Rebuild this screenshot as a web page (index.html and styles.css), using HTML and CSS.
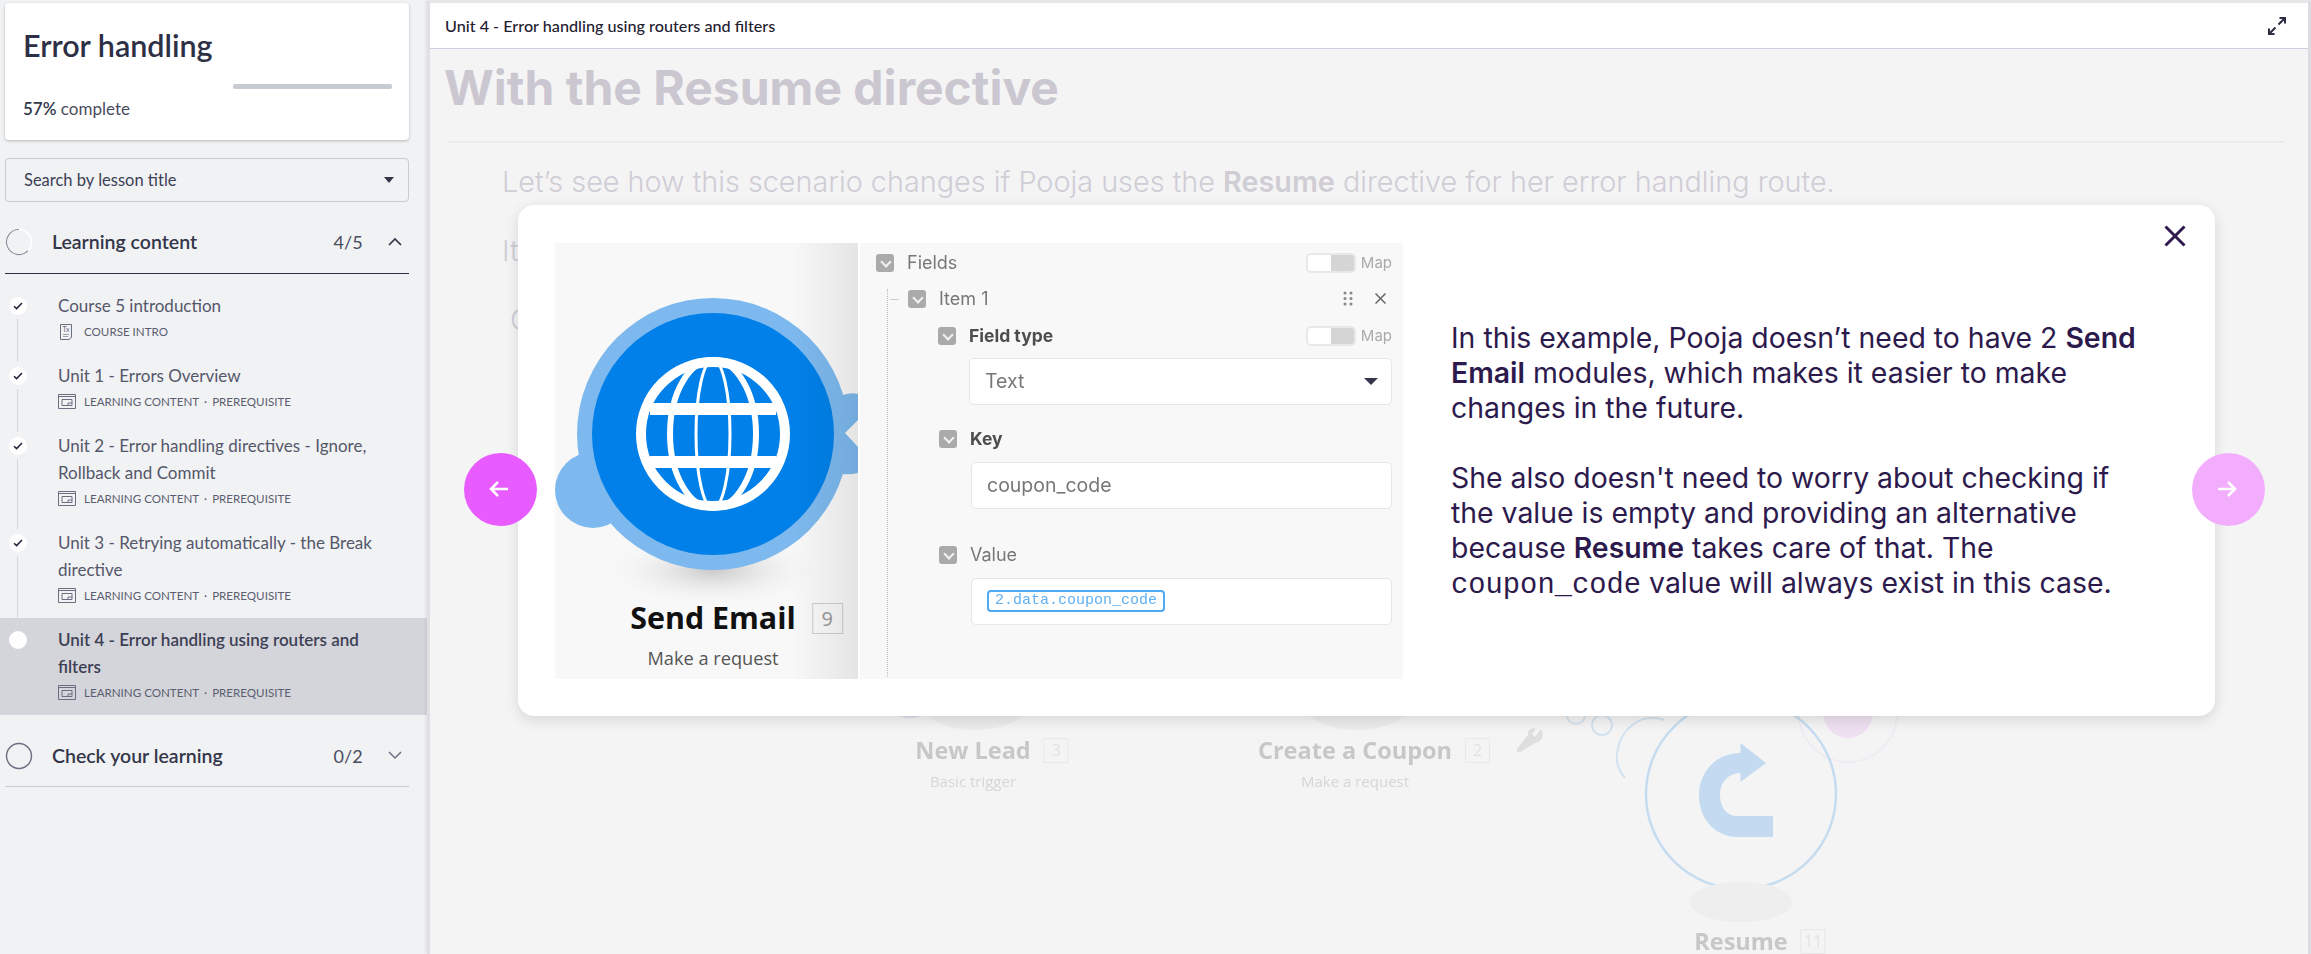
FILE: index.html

```html
<!DOCTYPE html>
<html lang="en">
<head>
  <meta charset="UTF-8" />
  <title>Error handling</title>
  <link rel="stylesheet" href="styles.css">
</head>
<body>
  <aside class="sidebar">
    <div class="course-card">
      <h2>Error handling</h2>
      <div class="progress-track"></div>
      <div class="progress-text"><b>57%</b> complete</div>
    </div>

    <div class="search-box">
      <span>Search by lesson title</span>
      <i class="caret"></i>
    </div>

    <div class="section-head open">
      <svg class="ring" width="28" height="28" viewBox="0 0 28 28">
        <circle cx="14" cy="14" r="12.5" fill="none" stroke="#fff" stroke-width="1.6"/>
        <path d="M14 1.5A12.5 12.5 0 1 0 23 22.7" fill="none" stroke="#8d8f9c" stroke-width="1.2"/>
      </svg>
      <span class="section-title">Learning content</span>
      <span class="section-count">4/5</span>
      <svg width="14" height="9" viewBox="0 0 14 9"><path d="M1 8l6-6 6 6" fill="none" stroke="#34364a" stroke-width="1.7"/></svg>
    </div>

    <ul class="lessons">
      <li class="lesson">
        <span class="dot done"><svg width="10" height="8" viewBox="0 0 10 8"><path d="M1 4.2l2.6 2.4L9 1" fill="none" stroke="#23243a" stroke-width="1.5"/></svg></span>
        <div class="lesson-title">Course 5 introduction</div>
        <div class="lesson-meta">
          <svg class="meta-icon" width="18" height="18" viewBox="0 0 18 18"><path d="M2.5 1.5h11v13l-2.5 2h-8.500z" fill="none" stroke="#6b6e80"/><path d="M5 11.500h6M5 13.500h5" stroke="#9fa1ae"/><text x="4.500" y="9" class="tx">Tx</text></svg>
          COURSE INTRO
        </div>
      </li>
      <li class="lesson">
        <span class="dot done"><svg width="10" height="8" viewBox="0 0 10 8"><path d="M1 4.2l2.6 2.4L9 1" fill="none" stroke="#23243a" stroke-width="1.5"/></svg></span>
        <div class="lesson-title">Unit 1 - Errors Overview</div>
        <div class="lesson-meta">
          <svg class="meta-icon" width="18" height="15" viewBox="0 0 18 15"><path d="M.5.5h17v14H.5zM.5 2.500h17" fill="none" stroke="#6b6e80"/><path d="M4 5.500h10v6H4zM10 11.500V9h4" fill="none" stroke="#6b6e80"/></svg>
          LEARNING CONTENT <em>·</em> PREREQUISITE
        </div>
      </li>
      <li class="lesson">
        <span class="dot done"><svg width="10" height="8" viewBox="0 0 10 8"><path d="M1 4.2l2.6 2.4L9 1" fill="none" stroke="#23243a" stroke-width="1.5"/></svg></span>
        <div class="lesson-title">Unit 2 - Error handling directives - Ignore, Rollback and Commit</div>
        <div class="lesson-meta">
          <svg class="meta-icon" width="18" height="15" viewBox="0 0 18 15"><path d="M.5.5h17v14H.5zM.5 2.500h17" fill="none" stroke="#6b6e80"/><path d="M4 5.500h10v6H4zM10 11.500V9h4" fill="none" stroke="#6b6e80"/></svg>
          LEARNING CONTENT <em>·</em> PREREQUISITE
        </div>
      </li>
      <li class="lesson">
        <span class="dot done"><svg width="10" height="8" viewBox="0 0 10 8"><path d="M1 4.2l2.6 2.4L9 1" fill="none" stroke="#23243a" stroke-width="1.5"/></svg></span>
        <div class="lesson-title">Unit 3 - Retrying automatically - the Break directive</div>
        <div class="lesson-meta">
          <svg class="meta-icon" width="18" height="15" viewBox="0 0 18 15"><path d="M.5.5h17v14H.5zM.5 2.500h17" fill="none" stroke="#6b6e80"/><path d="M4 5.500h10v6H4zM10 11.500V9h4" fill="none" stroke="#6b6e80"/></svg>
          LEARNING CONTENT <em>·</em> PREREQUISITE
        </div>
      </li>
      <li class="lesson current">
        <span class="dot"></span>
        <div class="lesson-title">Unit 4 - Error handling using routers and filters</div>
        <div class="lesson-meta">
          <svg class="meta-icon" width="18" height="15" viewBox="0 0 18 15"><path d="M.5.5h17v14H.5zM.5 2.500h17" fill="none" stroke="#6b6e80"/><path d="M4 5.500h10v6H4zM10 11.500V9h4" fill="none" stroke="#6b6e80"/></svg>
          LEARNING CONTENT <em>·</em> PREREQUISITE
        </div>
      </li>
    </ul>

    <div class="section-head closed">
      <svg class="ring" width="28" height="28" viewBox="0 0 28 28"><circle cx="14" cy="14" r="12.500" fill="none" stroke="#6d6f80" stroke-width="1.500"/></svg>
      <span class="section-title">Check your learning</span>
      <span class="section-count">0/2</span>
      <svg width="14" height="9" viewBox="0 0 14 9"><path d="M1 1l6 6 6-6" fill="none" stroke="#6d6f80" stroke-width="1.500"/></svg>
    </div>
  </aside>

  <main class="main">
    <header class="topbar">
      <span>Unit 4 - Error handling using routers and filters</span>
      <svg width="18" height="18" viewBox="0 0 18 18"><path d="M10.500 7.500L17 1M11.500 1H17v5.500M7.500 10.500L1 17M6.500 17H1v-5.500" fill="none" stroke="#2b2d42" stroke-width="2"/></svg>
    </header>

    <article class="lesson-body">
      <h1>With the Resume directive</h1>
      <hr>
      <p>Let’s see how this scenario changes if Pooja uses the <b>Resume</b> directive for her error handling route.</p>
      <p>It</p>
      <p class="indented">C</p>
    </article>

    <!-- faded scenario behind the dialog -->
    <div class="diagram">
      <svg width="1884" height="954" viewBox="427 0 1884 954">
        <ellipse cx="910" cy="712" rx="16" ry="6" fill="#dfdbef"/>
        <ellipse cx="975" cy="705" rx="52" ry="25" fill="#ececed"/>
        <ellipse cx="1357" cy="705" rx="52" ry="25" fill="#ececed"/>
        <circle cx="1576" cy="715" r="9" fill="none" stroke="#d3e2ef" stroke-width="2"/>
        <circle cx="1602" cy="725" r="10" fill="none" stroke="#d3e2ef" stroke-width="2"/>
        <path d="M1664 720c-22-8-44 8-47 34-1 9 2 17 8 24" fill="none" stroke="#d3e2ef" stroke-width="2"/>
        <circle cx="1848" cy="713" r="49" fill="none" stroke="#f1ebf3" stroke-width="2"/>
        <circle cx="1848" cy="713" r="25" fill="#eee0f0"/>
        <circle cx="1741" cy="794" r="95" fill="none" stroke="#c5dcf0" stroke-width="2.500"/>
        <ellipse cx="1741" cy="902" rx="51" ry="20" fill="#eeeeee"/>
        <path d="M1740.500 743L1766 763 1740.500 782V773C1728 773 1720 783 1720 795 1720 808 1727 816 1737 816H1773V837H1738C1715 837 1699 819 1699 795 1699 771 1717 753 1740.500 753z" fill="#c3daf0"/>
        <path d="M1541 729c3 5 2 11-3 13l-3 1-15 9c-2 1-4-1-3-3l11-14 0-3c1-3 6-5 8-3l-4 5 3 3z" fill="#dedede"/>
      </svg>
      <div class="node node-lead"><span class="node-name">New Lead<i class="node-badge">3</i></span><small>Basic trigger</small></div>
      <div class="node node-coupon"><span class="node-name">Create a Coupon<i class="node-badge">2</i></span><small>Make a request</small></div>
      <div class="node node-resume"><span class="node-name">Resume<i class="node-badge">11</i></span></div>
    </div>

    <section class="dialog">
      <div class="figure">
        <div class="module">
          <svg class="module-art" width="303" height="436" viewBox="555 243 303 436">
            <defs>
              <radialGradient id="shade"><stop offset="0" stop-color="#c9c9c9"/><stop offset="1" stop-color="#f8f8f8" stop-opacity="0"/></radialGradient>
            </defs>
            <ellipse cx="713" cy="570" rx="112" ry="38" fill="url(#shade)"/>
            <circle cx="593" cy="490" r="38" fill="#7db9ee"/>
            <path d="M840 396Q850 392 858 394V473Q850 475 840 474z" fill="#7db9ee"/>
            <circle cx="713" cy="434" r="136" fill="#7db9ee"/>
            <path d="M858 420L845 433 858 447z" fill="#f8f8f8"/>
            <circle cx="713" cy="434" r="121" fill="#0080e8"/>
            <g fill="none" stroke="#fff">
              <circle cx="713" cy="434" r="72" stroke-width="10"/>
              <path d="M650 409h126M650 462h126" stroke-width="12"/>
              <ellipse cx="713" cy="434" rx="43" ry="74" stroke-width="6"/>
              <ellipse cx="713" cy="434" rx="17" ry="74" stroke-width="3"/>
            </g>
          </svg>
          <div class="node node-send"><span class="node-name">Send Email<i class="node-badge">9</i></span><small>Make a request</small></div>
        </div>

        <div class="fields">
          <div class="field-row row-fields">
            <span class="fold"></span><span>Fields</span>
            <span class="map"><i class="switch"></i>Map</span>
          </div>
          <div class="item">
            <div class="field-row row-item">
              <span class="fold"></span><span>Item 1</span>
              <span class="item-tools">
                <svg width="10" height="15" viewBox="0 0 10 15" fill="#888"><circle cx="2" cy="2" r="1.500"/><circle cx="8" cy="2" r="1.500"/><circle cx="2" cy="7.500" r="1.500"/><circle cx="8" cy="7.500" r="1.500"/><circle cx="2" cy="13" r="1.500"/><circle cx="8" cy="13" r="1.500"/></svg>
                <svg width="11" height="11" viewBox="0 0 11 11"><path d="M.5.500l10 10M10.500.500l-10 10" stroke="#666" stroke-width="1.500"/></svg>
              </span>
            </div>
            <div class="field-row strong row-type">
              <span class="fold"></span><span>Field type</span>
              <span class="map"><i class="switch"></i>Map</span>
            </div>
            <div class="input select">Text<i class="caret"></i></div>
            <div class="field-row strong row-key"><span class="fold"></span><span>Key</span></div>
            <div class="input">coupon_code</div>
            <div class="field-row row-value"><span class="fold"></span><span>Value</span></div>
            <div class="input"><span class="chip">2.data.coupon_code</span></div>
          </div>
        </div>
      </div>

      <div class="dialog-text">
        <p>In this example, Pooja doesn’t need to have 2 <b>Send Email</b> modules, which makes it easier to make changes in the future.</p>
        <p>She also doesn't need to worry about checking if the value is empty and providing an alternative because <b>Resume</b> takes care of that. The <code>coupon_code</code> value will always exist in this case.</p>
      </div>

      <svg class="dialog-close" width="22" height="22" viewBox="0 0 22 22"><path d="M1.500 1.500l19 19M20.500 1.500l-19 19" stroke="#2f1a4e" stroke-width="3"/></svg>
    </section>

    <button class="nav prev"><svg width="20" height="18" viewBox="0 0 20 18"><path d="M19 9H2M9 2L2 9l7 7" fill="none" stroke="#fff" stroke-width="2.500"/></svg></button>
    <button class="nav next"><svg width="20" height="18" viewBox="0 0 20 18"><path d="M1 9h17M11 2l7 7-7 7" fill="none" stroke="#fff" stroke-width="2.500"/></svg></button>
  </main>
</body>
</html>
```

FILE: styles.css

```css
* {
  box-sizing: border-box;
}
html, body {
  height: 100%;
}
body {
  margin: 0;
  display: flex;
  overflow: hidden;
  background-color: #f1f2f4;
  color: #34364a;
  font-family: "Lato", "Noto Sans", sans-serif;
}

/* sidebar */
.sidebar {
  width: 427px;
  flex: none;
  padding-top: 3px;
}
.course-card {
  margin: 0 18px 0 5px;
  height: 137px;
  padding: 23px 17px 0 18px;
  background-color: #fff;
  border-radius: 4px;
  box-shadow: 0 1px 3px rgba(0, 0, 0, 0.25);
}
.course-card h2 {
  margin: 0;
  font-size: 30.5px;
  line-height: 38px;
  font-weight: 600;
  color: #2d2f45;
}
.progress-track {
  width: 159px;
  height: 5px;
  margin: 20px 0 0 auto;
  background-color: #c8cad4;
  border-radius: 2px;
}
.progress-text {
  margin-top: 9px;
  font-size: 17px;
  line-height: 22px;
  color: #4a4c60;
}
.progress-text b {
  font-weight: 600;
  color: #34364a;
}
.search-box {
  display: flex;
  align-items: center;
  justify-content: space-between;
  height: 44px;
  margin: 18px 18px 0 5px;
  padding: 0 14px 0 18px;
  border: 1px solid #c8cad4;
  border-radius: 4px;
  font-size: 16.5px;
  color: #3d3f54;
}
.caret {
  display: block;
  border-style: solid;
  border-width: 6px 5px 0;
  border-color: #34364a transparent transparent;
}
.section-head {
  display: flex;
  align-items: center;
  height: 72px;
  margin: 0 18px 0 5px;
  padding-right: 7px;
}
.section-head.open {
  padding-top: 8px;
  border-bottom: 1px solid #2d2f45;
}
.section-head.closed {
  padding-top: 10px;
  border-bottom: 1px solid #c8cad4;
}
.ring {
  flex: none;
}
.section-title {
  flex: 1;
  margin-left: 19px;
  font-size: 19.5px;
  font-weight: 600;
}
.section-count {
  margin-right: 25px;
  font-size: 18px;
  letter-spacing: 0.2px;
  color: #4a4c60;
}
.lessons {
  list-style: none;
  margin: 0;
  padding: 10px 0 0;
}
.lesson {
  position: relative;
  padding: 8px 50px 10px 58px;
  color: #55576a;
}
.lesson-title {
  font-size: 17px;
  line-height: 27px;
}
.lesson-meta {
  display: flex;
  align-items: center;
  height: 25px;
  font-size: 11.6px;
  color: #5b5d70;
}
.lesson-meta em {
  margin: 0 5px;
  font-style: normal;
}
.meta-icon {
  margin-right: 8px;
}
.tx {
  font-size: 7px;
  fill: #6b6e80;
}
.dot {
  position: absolute;
  left: 9px;
  top: 13px;
  width: 18px;
  height: 18px;
  display: flex;
  align-items: center;
  justify-content: center;
  border-radius: 50%;
  background-color: #fff;
}
.lesson::before {
  content: "";
  position: absolute;
  z-index: 1;
  left: 17px;
  top: 35px;
  bottom: -8px;
  width: 1px;
  background-color: #d6d7dd;
}
.lesson.current::before {
  display: none;
}
.lesson.current {
  background-color: #d4d5da;
}
.lesson.current .lesson-title {
  font-weight: 600;
  color: #3d3f54;
}

/* main panel */
.main {
  position: relative;
  flex: 1;
  min-width: 0;
  background-color: #f4f4f5;
  border-style: solid;
  border-width: 3px 3px 0;
  border-color: #e6e6e9 #dcdce0 #e6e6e9 #e0e0e3;
  box-shadow: -2px 0 3px rgba(0, 0, 0, 0.05);
}
.topbar {
  display: flex;
  align-items: center;
  justify-content: space-between;
  height: 46px;
  padding: 0 22px 0 15px;
  background-color: #fff;
  border-bottom: 1px solid #cdd0de;
  font-size: 16.2px;
  font-weight: 500;
  color: #1f2130;
}
.lesson-body {
  padding: 0 24px 0 14px;
  font-family: "Inter", sans-serif;
  color: #d0cdd5;
}
.lesson-body h1 {
  margin: 12px 0 0;
  font-size: 48px;
  line-height: 54px;
  font-weight: 700;
  color: #cbc7d0;
}
.lesson-body hr {
  height: 2px;
  margin: 26px 0 0 3px;
  border: 0;
  background-color: #ebebec;
}
.lesson-body p {
  height: 35px;
  margin: 21px 0 0 58px;
  font-size: 28.8px;
  line-height: 35px;
  font-weight: 300;
}
.lesson-body p + p {
  margin-top: 34px;
}
.lesson-body p.indented {
  margin-left: 66px;
}
.lesson-body b {
  font-weight: 600;
}

/* scenario behind the dialog, placed on its own canvas */
.diagram {
  position: absolute;
  left: -3px;
  top: -3px;
  width: 1884px;
  height: 954px;
  overflow: hidden;
}
.diagram svg {
  display: block;
}
.node {
  position: absolute;
  display: flex;
  flex-direction: column;
  align-items: center;
  transform: translateX(-50%);
  font-family: "Open Sans", sans-serif;
  white-space: nowrap;
}
.node-name {
  position: relative;
  font-weight: 700;
}
.node-badge {
  position: absolute;
  top: 50%;
  font-style: normal;
  font-weight: 400;
  text-align: center;
  border-style: solid;
}
.diagram .node {
  color: #c7c7c7;
  filter: blur(0.5px);
}
.diagram .node-name {
  font-size: 23.5px;
  line-height: 32px;
}
.diagram .node small {
  margin-top: 3px;
  font-size: 15px;
  line-height: 24px;
  color: #d6d6d6;
}
.diagram .node-badge {
  left: calc(100% + 13px);
  width: 25px;
  height: 25px;
  margin-top: -12px;
  border-width: 1px;
  border-color: #e9e9e9;
  color: #e2e2e2;
  font-size: 16px;
  line-height: 23px;
}
.node-lead {
  left: 546px;
  top: 734px;
}
.node-coupon {
  left: 928px;
  top: 734px;
}
.node-resume {
  left: 1314px;
  top: 925px;
}

/* dialog */
.dialog {
  position: absolute;
  left: 88px;
  top: 202px;
  width: 1697px;
  height: 511px;
  display: flex;
  align-items: center;
  padding: 0 70px 0 37px;
  background-color: #fff;
  border-radius: 16px;
  box-shadow: 0 4px 14px rgba(0, 0, 0, 0.12);
}
.figure {
  flex: none;
  display: flex;
  gap: 2px;
  width: 848px;
  height: 436px;
}
.module {
  position: relative;
  flex: none;
  width: 303px;
  overflow: hidden;
  background-color: #f8f8f8;
}
.module::after {
  content: "";
  position: absolute;
  inset: 0;
  background: linear-gradient(90deg, transparent 78%, rgba(0, 0, 0, 0.08));
}
.module-art {
  position: absolute;
  left: 0;
  top: 0;
}
.node-send {
  left: 158px;
  top: 355px;
  color: #111;
}
.node-send .node-name {
  font-size: 30.4px;
  line-height: 40px;
}
.node-send small {
  font-size: 18.2px;
  line-height: 24px;
  margin-top: 8px;
  color: #555;
}
.node-send .node-badge {
  left: calc(100% + 16px);
  width: 31px;
  height: 31px;
  margin-top: -15px;
  border-width: 1px;
  border-color: #ccc;
  color: #999;
  font-size: 20px;
  line-height: 29px;
}
.fields {
  flex: 1;
  padding: 10px 11px 2px 16px;
  background-color: #f8f8f8;
  font-family: "Inter", sans-serif;
  font-size: 18px;
  color: #777;
  filter: blur(0.3px);
}
.field-row {
  display: flex;
  align-items: center;
  gap: 13px;
  height: 20px;
}
.field-row.strong {
  font-size: 17.5px;
  font-weight: 700;
  color: #4d4d4d;
}
.fold {
  position: relative;
  flex: none;
  width: 18px;
  height: 18px;
  border-radius: 3px;
  background-color: #aaa;
}
.fold::after {
  content: "";
  position: absolute;
  left: 6px;
  top: 4px;
  width: 6px;
  height: 6px;
  border: solid #f1f1f1;
  border-width: 0 2px 2px 0;
  transform: rotate(45deg);
}
.map {
  display: flex;
  align-items: center;
  gap: 5px;
  margin-left: auto;
  font-size: 15px;
  font-weight: 400;
  color: #aaa;
}
.switch {
  display: block;
  width: 50px;
  height: 20px;
  border: 2px solid #e8e8e8;
  border-radius: 5px;
  background: linear-gradient(90deg, #fff 50%, #d5d5d5 50%);
}
.item {
  position: relative;
  height: 388px;
  margin: 16px 0 0 11px;
  padding-left: 20px;
  border-left: 1px dotted #bbb;
}
.item::before {
  content: "";
  position: absolute;
  left: 2px;
  top: 10px;
  width: 9px;
  height: 1px;
  background-color: #ccc;
}
.item-tools {
  display: flex;
  align-items: center;
  gap: 22px;
  margin-left: auto;
  padding-right: 6px;
}
.row-type {
  margin: 17px 0 0 30px;
}
.row-key {
  margin: 24px 0 0 31px;
}
.row-value {
  margin: 36px 0 0 31px;
}
.input {
  display: flex;
  align-items: center;
  height: 47px;
  margin: 13px 0 0 63px;
  padding-left: 15px;
  background-color: #fff;
  border: 1px solid #e6e6e6;
  border-radius: 5px;
  font-size: 19.5px;
  color: #777;
}
.row-type + .input {
  margin: 12px 0 0 61px;
}
.select {
  justify-content: space-between;
  padding-right: 13px;
}
.select .caret {
  border-width: 7px 7px 0;
}
.chip {
  height: 22px;
  padding: 0 6px;
  border: 2px solid #4fa9f3;
  border-radius: 4px;
  font-family: "Liberation Mono", monospace;
  font-size: 15px;
  line-height: 18px;
  color: #62b1f2;
}
.dialog-text {
  flex: 1;
  margin-left: 48px;
  font-family: "Inter", sans-serif;
  font-size: 28.4px;
  line-height: 35px;
  font-weight: 400;
  color: #2d1a4d;
}
.dialog-text p {
  margin: 0;
}
.dialog-text p + p {
  margin-top: 35px;
}
.dialog-text b {
  font-weight: 600;
}
.dialog-text code {
  font-family: "Liberation Mono", monospace;
  font-size: 28.8px;
  line-height: 1;
}
.dialog-close {
  position: absolute;
  right: 29px;
  top: 20px;
}
.nav {
  position: absolute;
  top: 450px;
  width: 73px;
  height: 73px;
  display: flex;
  align-items: center;
  justify-content: center;
  padding: 0 4px 2px 0;
  border: 0;
  border-radius: 50%;
}
.nav.prev {
  left: 34px;
  background-color: #e85cff;
}
.nav.next {
  left: 1762px;
  background-color: #f2aefd;
}
```
